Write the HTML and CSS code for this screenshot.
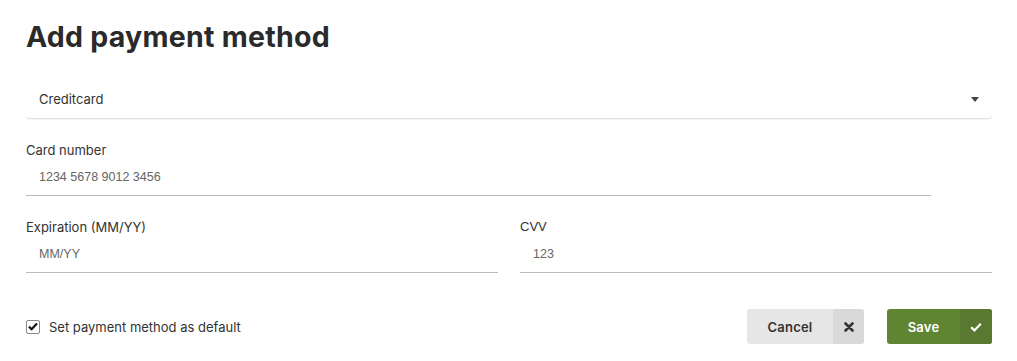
FILE: index.html
```html
<!DOCTYPE html>
<html>
<head>
<meta charset="utf-8">
<link rel="stylesheet" href="styles.css">
</head>
<body>
<div class="page">
  <h1 class="title">Add payment method</h1>
  <div class="select">
    <span class="select-text">Creditcard</span>
    <svg class="caret" width="8" height="5" viewBox="0 0 8 5"><path d="M0 0h8L4 5z" fill="#444"/></svg>
  </div>
  <div class="field field-card">
    <div class="label">Card number</div>
    <div class="input">1234 5678 9012 3456</div>
  </div>
  <div class="row">
    <div class="field">
      <div class="label">Expiration (MM/YY)</div>
      <div class="input">MM/YY</div>
    </div>
    <div class="field">
      <div class="label label-arial">CVV</div>
      <div class="input">123</div>
    </div>
  </div>
  <div class="footer">
    <label class="check">
      <span class="box"><svg width="10" height="9" viewBox="0 0 10 9"><path d="M1 4.6l2.6 2.6L9 1.6" fill="none" stroke="#111" stroke-width="2.2"/></svg></span>
      <span class="check-text">Set payment method as default</span>
    </label>
    <div class="buttons">
      <button class="btn btn-cancel"><span class="btn-label">Cancel</span><span class="btn-icon"><svg width="10" height="10" viewBox="0 0 10 10"><path d="M1.5 1.5l7 7M8.5 1.5l-7 7" stroke="#333" stroke-width="2.6" stroke-linecap="round"/></svg></span></button>
      <button class="btn btn-save"><span class="btn-label">Save</span><span class="btn-icon"><svg width="12" height="10" viewBox="0 0 12 10"><path d="M1.2 5.2l3.2 3.2L10.8 1.8" fill="none" stroke="#fff" stroke-width="2.2"/></svg></span></button>
    </div>
  </div>
</div>
</body>
</html>
```
FILE: styles.css
```css
* { box-sizing: border-box; }
body {
  margin: 0;
  background: #fff;
  font-family: Inter, "Noto Sans", sans-serif;
  color: #333;
}
.page {
  width: 966px;
  margin-left: 26px;
  padding-top: 19px;
}
.title {
  margin: 0;
  font-size: 28.5px;
  font-weight: 700;
  line-height: 36px;
  color: #2a2a2a;
  letter-spacing: 0.25px;
}
.select {
  margin-top: 25px;
  height: 39px;
  display: flex;
  align-items: center;
  justify-content: space-between;
  padding: 0 13px;
  border-bottom: 1px solid #e2e2e2;
  border-radius: 0 0 4px 4px;
  box-shadow: 0 1px 1px rgba(0,0,0,0.04);
}
.select-text {
  font-size: 13px;
  color: #333;
}
.caret { margin-top: 1px; }
.field-card {
  width: 905px;
  margin-top: 23px;
}
.label {
  font-size: 13px;
  line-height: 16px;
  color: #333;
}
.label-arial {
  font-family: "Liberation Sans", Arial, sans-serif;
}
.input {
  height: 38px;
  padding: 12px 13px 0;
  font-family: "Liberation Sans", Arial, sans-serif;
  font-size: 12.5px;
  color: #666;
  border-bottom: 1px solid #bbb;
}
.row {
  display: grid;
  grid-template-columns: 1fr 1fr;
  column-gap: 22px;
  margin-top: 23px;
}
.footer {
  margin-top: 36px;
  display: flex;
  justify-content: space-between;
  align-items: center;
}
.check {
  display: flex;
  align-items: center;
  gap: 9px;
}
.box {
  width: 14px;
  height: 14px;
  border: 1px solid #888;
  border-radius: 2px;
  display: flex;
  align-items: center;
  justify-content: center;
}
.check-text {
  font-size: 13px;
  color: #333;
}
.buttons {
  display: flex;
  gap: 23px;
}
.btn {
  display: flex;
  border: 0;
  padding: 0;
  height: 35px;
  border-radius: 3px;
  overflow: hidden;
  font-family: Inter, "Noto Sans", sans-serif;
  font-size: 13px;
  font-weight: 600;
  letter-spacing: 0.2px;
  cursor: pointer;
}
.btn-label {
  display: flex;
  align-items: center;
  justify-content: center;
}
.btn-icon {
  width: 31px;
  display: flex;
  align-items: center;
  justify-content: center;
}
.btn-cancel { width: 117px; background: #e6e6e6; color: #333; }
.btn-cancel .btn-label { flex: 1; }
.btn-cancel .btn-icon { background: #d9d9d9; }
.btn-save { width: 105px; background: #5f8533; color: #fff; }
.btn-save .btn-label { flex: 1; }
.btn-save .btn-icon { width: 32px; background: #58792f; }
```
